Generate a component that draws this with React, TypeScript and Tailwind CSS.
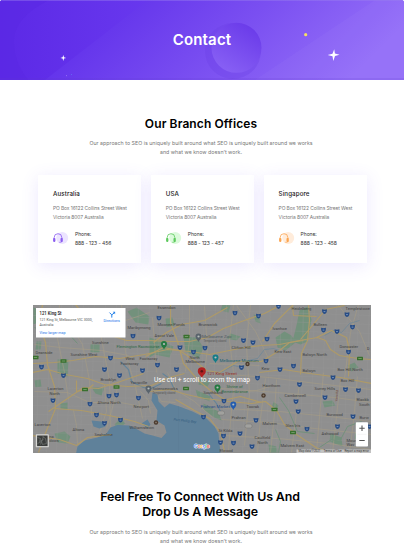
import React from "react";

type Point = [number, number];

const offices = [
  { city: "Australia", phone: "888 - 123 - 456", color: "#8a5cf0", tint: "#ece4ff" },
  { city: "USA", phone: "888 - 123 - 457", color: "#5cc95c", tint: "#dbfadb" },
  { city: "Singapore", phone: "888 - 123 - 458", color: "#fba550", tint: "#ffecdb" },
];

const labels: [string, number, number][] = [
  ["Sunshine", 92.5, 343.5], ["Deanside", 36, 353.2], ["Sunshine West", 71, 355.2], ["Maribyrnong", 128, 328],
  ["West", 126, 359.6], ["Footscray", 121, 364.4], ["Footscray", 140, 359.6], ["Brooklyn", 101, 380.5],
  ["Essendon", 158, 308.3], ["Moonee Ponds", 158, 325], ["Ascot Vale", 155, 336], ["Brunswick", 199, 325.3],
  ["Clifton Hill", 232, 348], ["North", 190, 358], ["Melbourne", 186, 362.9], ["Kew", 262, 369.3],
  ["Heidelberg", 292, 309.8], ["Templestowe", 346, 309.2], ["Ivanhoe", 273, 329.2], ["Bulleen", 314, 325.5],
  ["Kew East", 275, 352.3], ["Balwyn North", 303, 355.2], ["Doncaster", 340, 347.8], ["Balwyn", 303, 371],
  ["Box Hill North", 338, 370.5], ["Box Hill", 341, 381.5], ["Laverton", 48, 389.3], ["North", 50, 394],
  ["Laverton", 35, 425.8], ["Altona", 73, 430.2], ["Seaholme", 95, 435.7], ["Altona North", 98, 403.5],
  ["Yarraville", 131, 383.5], ["Newport", 134, 407], ["Williamstown", 130, 428], ["Southbank", 204, 393],
  ["Scienceworks", 153, 389], ["Toorak", 247, 407], ["Prahran", 232, 418.5], ["St Kilda", 219, 431],
  ["Caulfield", 255, 438.3], ["North", 258, 443], ["Elwood", 220, 451], ["Hawthorn", 263, 386],
  ["Camberwell", 285, 396.7], ["Surrey Hills", 315, 389.8], ["Burwood", 327, 415.5], ["Malvern", 263, 424],
  ["Glen Iris", 286, 426.5], ["Ashwood", 322, 434.5], ["Malvern East", 281, 446], ["Blackb", 357, 400.6],
  ["South", 359.5, 405.4], ["Burw", 360, 418.5], ["Mount", 347, 441.2], ["Wav", 347, 445.9],
];

const shields: Point[] = [
  [133.5, 335.5], [111, 357.5], [42, 366.5], [64, 375], [105, 369], [120, 375], [143, 370],
  [159.5, 317.5], [235.5, 312.5], [259, 315.5], [244, 340], [253.5, 342], [180.5, 347], [205.5, 347.5], [194, 351.5], [158, 364.5],
  [177, 369], [242, 367], [267.5, 338.5], [325, 311], [347.5, 314], [353, 326.5], [324, 329.5], [337.5, 331],
  [349, 351.5], [266.5, 360.5], [294, 365.5], [280.5, 369], [258, 377.5], [333.5, 377], [279, 306],
  [53.5, 400], [90.5, 403.5], [109.5, 395.5], [117, 394.5], [139, 397.5], [97, 414.5], [105, 422.8], [121, 419.5],
  [224.5, 400.5], [204, 416.5], [256.5, 419.7], [224, 435.5], [240.5, 433], [221, 442], [234, 442.5], [252.5, 446],
  [300, 384], [296.5, 401], [298.7, 411], [325.5, 397], [346, 389], [359, 390], [353.5, 416], [338, 426], [307.5, 428.5], [370, 426],
];

const mainRoads = [
  "M33 363L55 362 73 360 96 356 120 358 145 354 168 349 190 351 210 354 230 350 245 347 262 345 280 344 300 340 318 337 326 340 331 349 340 355 358 358 372 359",
  "M33 372L48 369 66 374 88 378 105 384 128 386 152 385 170 377 185 373",
  "M76 304L90 322 105 333 127 340 148 340 172 341 190 341 208 337 224 328 242 321 265 313 282 304",
  "M43 304L40 324 46 342 48 364 55 386 56 408 47 430 39 452",
  "M49 411L68 398 84 387 99 388 118 382 144 373",
  "M55 408L82 410 110 415 135 421 149 426",
  "M33 435L60 439 77 445 88 437 112 434",
  "M77 380L77 391 88 389 94 384",
  "M171 304L171 322 178 341 184 363 199 380 211 390 228 401 252 403 266 401 277 410 285 424 297 434 318 448 337 452",
  "M150 391L170 389 187 394 205 398 223 400 241 396 262 402",
  "M154 342L167 332 182 324 205 320 228 307",
  "M146 356L164 347 180 350 195 360 207 370 220 372 238 361 262 361 280 350 290 342 304 340",
  "M309 304L310 320 308 340 302 353 301 374",
  "M301 339L313 325 326 309 345 305",
  "M317 337L332 330 347 337 350 350 349 376",
  "M293 306L294 315 317 316",
  "M263 341L275 323 294 304",
  "M260 372L284 369 310 373 341 377 372 383",
  "M176 399L195 410 210 418 221 432 225 451",
];

const minorRoads = [
  "M56 322L97 330 126 320 150 312", "M35 344L61 347 102 350 129 355", "M60 304L58 338 65 372 69 399",
  "M97 310L104 349 110 380 111 427", "M122 304L126 352 136 387 143 418", "M68 320L83 344 90 380 92 414",
  "M74 410L77 425 78 444", "M35 391L68 392 90 402 121 402 147 407", "M105 384L107 411 100 432",
  "M119 382L115 400 107 428", "M153 317L155 342 157 372", "M190 304L190 340 186 371", "M205 306L208 348 204 380",
  "M234 304L230 340 235 380 231 420 229 451", "M251 304L247 344 250 394 245 445", "M215 373L270 377 317 383 372 389",
  "M221 388L278 392 335 397 372 402", "M225 408L280 411 329 416 372 421", "M222 419L270 422 315 428 372 434",
  "M225 435L278 438 329 443 372 449", "M277 379L275 413 271 452", "M300 380L296 420 292 452",
  "M324 372L320 416 317 452", "M341 379L337 416 333 452", "M358 376L354 421 350 452", "M266 378L261 418 258 452",
  "M237 305L256 331 270 360", "M338 304L360 331 370 355", "M359 304L351 332 345 378", "M168 372L177 390 195 401 213 417",
  "M141 391L149 400 151 413", "M153 388L162 401 176 402", "M223 379L239 392 257 390 274 385", "M210 363L240 364 260 365",
];

const fineVertical = [...Array(31).keys()].map((i) => `M${40 + i * 11} 304l-${3 + (i % 4)} 148`).join("");
const fineHorizontal = [...Array(17).keys()].map((i) => `M33 ${306 + i * 9}L150 ${308 + i * 9}L372 ${315 + i * 9}`).join("");

function Shield({ at: [x, y] }: { at: Point }) {
  return (
    <g transform={`translate(${x} ${y})`}>
      <path d="M-2.4-2.2Q0-1.5 2.4-2.2Q2.8 1.8 0 2.6Q-2.8 1.8-2.4-2.2Z" fill="#274c85" />
      <path d="M-.9.1h1.8" stroke="#8ba4c8" strokeWidth=".8" />
    </g>
  );
}

function Pin({ x, y, color }: { x: number; y: number; color: string }) {
  return (
    <g transform={`translate(${x} ${y})`}>
      <path d="M0 4.5C-.7 2.4-3 1.5-3-1A3 3 0 0 1 3-1C3 1.5.7 2.4 0 4.5Z" fill={color} />
      <circle cy="-1" r="1.1" fill="#b5bdba" />
    </g>
  );
}

function MapView() {
  return (
    <svg className="block h-[148px] w-[338px]" viewBox="33.5 304.5 338 148" fontFamily="Roboto, sans-serif">
      <rect x="33" y="304" width="339" height="149" fill="#8f8f8f" />
      <path fill="#73917c" d="M37 341h5l-1 8h-5zM58 359h11l-1 17-10-3zM91 344h9v8h-9zM34 307l6 3-2 12-4 2zM128 311l9-4 13 9-1 8-13-2zM150 337l13 4 11 5-4 11-15-3-5 3zM184 336l14 1 6 11-5 10-13-7zM300 310l8-4 4 13-4 22-7 3-8-3 4-16zM276 337l9-6 7 4 4 7-10 8-8-3zM35 380l6-1 1 7-6 1zM61 403l7-1v7l-7-1zM92 387h13l-3 8-6-2zM55 433l10-2 6 5-3 7-10-1zM115 424l6-6 5 5-8 5zM196 389l15 7-1 5-12-5zM204 403l15 8 3 9-7-3-11-8zM274 401l5 4-2 6-5-3zM323 401l10-1 3 5-11 2zM331 433l11 4 1 9-13-5zM269 444l8 2 1 6h-8zM348 365l7-3 4 5-7 4zM166 318l7-1 2 8-8 2zM223 304l8 1-2 7-8-2zM254 314l6 2 1 7-5-2zM231 333l10 3-4 4-10-2zM200 379l11 2-3 5-9-2zM356 432l10 1-2 7-9-2z" />
      <g fill="none" stroke="#989898" strokeWidth=".35">
        <path d={fineVertical} /><path d={fineHorizontal} />
      </g>
      <g fill="none" stroke="#a69c84" strokeWidth=".6">
        {minorRoads.map((d) => <path key={d} d={d} />)}
      </g>
      <path d="M76.5 453L78 446 85 440 98 437 107 433 111 427 118 424.5 130 425 138 429 145 433 153 435 162 437.5 167 432 165 425 157 420 158 410 152 400 153 392 158 394 159 401 165 407 170 403 180 406 193 411 207 418 215 426 219 433 221 453Z" fill="#5f819a" />
      <path d="M92 420l10 1 4 5-6 2-6-2zM148 419l3 5-3 4-6-5z" fill="#5f819a" />
      <g fill="none" stroke="#63849a">
        <path d="M121 361l8 8 3 12 12 6 8 1 10-5M163 373l7 5 4 9M209 393l8 10 5 10" strokeWidth="1.1" />
        <path d="M219 373l15-8 9 2 6-7 9-2 7-9 9-1 8 3M325 335l9-5 8 2 8-9 10-3" strokeWidth=".6" />
        <path d="M179 406V452" stroke="#527188" strokeWidth=".3" strokeDasharray="1 1" />
      </g>
      <path d="M35 327l15 6 16-3 12 13M280 397l9 13 9 21 17 2M320 447l12-8 8 2 8-15 14-5M276 429l5 12-2 11" fill="none" stroke="#73917c" strokeWidth="1" />
      <g fill="none" stroke="#ae9a68" strokeWidth="1.15" strokeLinejoin="round">
        {mainRoads.map((d) => <path key={d} d={d} />)}
      </g>
      {([[64, 360.5], [187, 336], [360.5, 358], [85.5, 389], [117, 386.5], [186.5, 388], [275, 409], [293.5, 432], [36, 357]] as Point[]).map(([x, y]) => (
        <g key={`${x}-${y}`}><rect x={x - 3} y={y - 1.7} width="6" height="3.4" rx=".5" fill="#39702e" /><path d={`M${x - 1.7} ${y}h3.4`} stroke="#96b58e" strokeWidth=".6" /></g>
      ))}
      {shields.map((p, i) => <Shield key={i} at={p} />)}
      <g fontSize="4.1" fill="#424242">
        {labels.map(([name, x, y], i) => <text key={i} x={x} y={y}>{name}</text>)}
        <text x="367.2" y="349.3">D</text>
      </g>
      <g fontSize="4.1" fill="#2d6946">
        <text x="117" y="347">Flemington Racecourse</text><text x="227" y="387.6">Shrine of</text><text x="222" y="392.6">Remembrance</text>
      </g>
      <text x="202.5" y="337.2" fontSize="4.4" fill="#4e5962">Melbourne Zoo</text>
      <text x="204" y="341.2" fontSize="2.7" fill="#555">Temporarily closed</text>
      <text x="153" y="393" fontSize="2.7" fill="#555">Temporarily closed</text>
      <text x="220" y="361" fontSize="4.4" fill="#19626f">Melbourne Museum</text>
      <text x="201" y="407.7" fontSize="4.3" fill="#294f87">Prahran Market</text>
      <text x="174" y="420" fontSize="3.5" fill="#345d80" fontStyle="italic" transform="rotate(7 174 420)">Port Phillip Bay</text>
      <text x="338" y="401" fontSize="3" fill="#744738" transform="rotate(-86 338 401)">Yarra Rd</text>
      <g fill="#a1a19e" stroke="#646464" strokeWidth=".35"><rect x="218" y="410.5" width="7" height="4" rx="1.7" /><rect x="245.5" y="423.5" width="7" height="4" rx="1.7" /></g>
      {([[248, 363.5], [264, 395], [156.5, 422]] as Point[]).map(([x, y]) => <g key={x}><circle cx={x} cy={y} r="2.2" fill="#4b3a2d" /><path d={`M${x - 1} ${y}h2M${x} ${y - 1}v2`} stroke="#a1988d" strokeWidth=".45" /></g>)}
      <Pin x={199} y={337} color="#59636c" /><Pin x={164.5} y={344.5} color="#247a41" /><Pin x={216} y={358} color="#147c87" />
      <Pin x={218} y={388} color="#247a41" /><Pin x={233.8} y={405} color="#245caf" /><Pin x={149} y={389} color="#59636c" />
      <path d="M202.3 378C201.5 374.5 198.3 373.8 198.3 370.7A4 4 0 0 1 206.3 370.7C206.3 373.8 203.1 374.5 202.3 378Z" fill="#b02222" />
      <circle cx="202.3" cy="370.7" r="1.3" fill="#5d1515" />
      <text x="207.5" y="374" fontSize="4.4" fill="#922c28">121 King Street</text>
      <text x="202.5" y="381.6" fontSize="6.8" textAnchor="middle" fill="#fff" textLength="96" lengthAdjust="spacingAndGlyphs">Use ctrl + scroll to zoom the map</text>
      <g>
        <rect x="36.5" y="307.5" width="89.5" height="29.5" fill="#fff" />
        <text x="40" y="314.9" fontSize="4.5" fontWeight="600" fill="#222" textLength="22" lengthAdjust="spacingAndGlyphs">121 King St</text>
        <text x="40" y="320.8" fontSize="3.7" fill="#555" textLength="53" lengthAdjust="spacingAndGlyphs">121 King St, Melbourne VIC 3000,</text>
        <text x="40" y="325.3" fontSize="3.7" fill="#555" textLength="14" lengthAdjust="spacingAndGlyphs">Australia</text>
        <text x="40" y="333.6" fontSize="3.7" fill="#1a73e8" textLength="26" lengthAdjust="spacingAndGlyphs">View larger map</text>
        <text x="104" y="321.8" fontSize="3.7" fill="#1a73e8" textLength="16.5" lengthAdjust="spacingAndGlyphs">Directions</text>
      </g>
      <path d="M110 312.1l2.3 2.3v2.7M112.3 314.4l2.6-2.2" stroke="#2380e8" fill="none" strokeWidth="1" /><path d="M113.3 311.3h2.3v2.4z" fill="#2380e8" />
      <text x="49.8" y="437" fontSize="4" fill="#444">na</text><text x="49.8" y="441.8" fontSize="4" fill="#444">dows</text>
      <rect x="36.3" y="433.8" width="13" height="13" rx=".6" fill="#d8d8d5" />
      <rect x="37.6" y="435" width="10.5" height="10.6" fill="#3b3d3c" />
      <path d="M38 437l3 1-1 3 4-2M43 436l3 2 1 5M38 443l4-2 1 3 4-1M44 436l-3 8" fill="none" stroke="#737774" strokeWidth=".7" />
      <text x="194.5" y="447.3" fontFamily="Inter, sans-serif" fontSize="5.2" fontWeight="600" stroke="#f3f3f3" strokeWidth=".8" paintOrder="stroke" textLength="15.5">
        <tspan fill="#4285f4">G</tspan><tspan fill="#e76156">o</tspan><tspan fill="#edb941">o</tspan><tspan fill="#4285f4">g</tspan><tspan fill="#47a967">l</tspan><tspan fill="#e76156">e</tspan>
      </text>
      <rect x="297" y="449" width="75" height="4" fill="#c2c2c2" />
      <g fontSize="2.8" fill="#333"><text x="299" y="451.7" textLength="22" lengthAdjust="spacingAndGlyphs">Map data ©2021</text><text x="324" y="451.7" textLength="18" lengthAdjust="spacingAndGlyphs">Terms of Use</text><text x="345" y="451.7" textLength="24.5" lengthAdjust="spacingAndGlyphs">Report a map error</text></g>
      <rect x="356.3" y="421.7" width="12.2" height="24.3" rx=".8" fill="#fff" />
      <path d="M358 433.8h9" stroke="#e4e4e4" strokeWidth=".4" />
      <path d="M359.8 427.8h5.4M362.5 425.1v5.4M359.8 440h5.4" stroke="#555" strokeWidth="1.1" />
    </svg>
  );
}

function Headset({ color, tint }: { color: string; tint: string }) {
  return (
    <svg className="block h-[14px] w-[16px]" viewBox="0 0 16 14" fill="none">
      <circle cx="9.2" cy="7" r="6" fill={tint} />
      <path d="M1.2 8V6.5a3.8 3.8 0 0 1 7.6 0V8M8.9 10.2c0 1-1 1.1-2.6 1.1" stroke={color} strokeWidth=".8" />
      <rect x=".1" y="7.1" width="2.3" height="3.8" rx=".8" fill={color} /><rect x="7.5" y="7.1" width="2.3" height="3.8" rx=".8" fill={color} />
    </svg>
  );
}

function Hero() {
  return (
    <header className="relative flex h-20 shrink-0 items-center justify-center overflow-hidden rounded-t-[3px] bg-[#6d3df0]">
      <svg className="absolute inset-0 h-20 w-[404px]" viewBox="0 0 404 80">
        <defs>
          <linearGradient id="hero" gradientUnits="userSpaceOnUse" x1="110" y1="0" x2="270" y2="160"><stop stopColor="#6232eb" /><stop offset=".5" stopColor="#7a4ff1" /><stop offset="1" stopColor="#946ff8" /></linearGradient>
          <linearGradient id="left" x1="0" x2="1"><stop stopColor="#5c29e6" /><stop offset="1" stopColor="#6838ee" /></linearGradient>
          <linearGradient id="orb" x1=".8" y1="0" x2=".2" y2="1"><stop stopColor="#6939e9" /><stop offset="1" stopColor="#8962f5" /></linearGradient>
        </defs>
        <path fill="url(#hero)" d="M0 0h404v80H0z" />
        <path d="M0 0H148L45 80H0Z" fill="url(#left)" />
        <path d="M49 0Q15 17 14 39T28 80H0V0Z" fill="#5a27e4" opacity=".5" />
        <path d="M375 0L255 80H404V0Z" fill="#b49aff" opacity=".08" />
        <circle cx="233" cy="51" r="28" fill="#6940e5" opacity=".3" />
        <circle cx="236.5" cy="47.8" r="25" fill="url(#orb)" />
        <path d="M0 .4H404" stroke="#9b80ef" strokeWidth=".8" opacity=".6" />
        <path d="M0 79H404" stroke="#633ccd" strokeWidth=".7" opacity=".45" />
        <circle cx="305.7" cy="34.7" r="1.6" fill="#f6df62" />
        <path d="M334.2 49.2l.7 4.4 4.6 1.1-4.5 1.4-1.7 4.9-.8-4.7-4.8-1.2 4.8-1.4z" fill="#fff" />
        <path d="M63.3 55l.7 2.3 2.2.6-2.2.7-.7 2.3-.7-2.3-2.2-.7 2.2-.6z" fill="#fff" />
        <circle cx="66.5" cy="75.8" r=".45" fill="#c4aaff" /><circle cx="71.5" cy="74.3" r=".4" fill="#60b8ff" />
      </svg>
      <h1 className="relative text-[15px] font-semibold leading-5 tracking-[0.17px] text-white">Contact</h1>
    </header>
  );
}

function Intro({ spaced = false }: { spaced?: boolean }) {
  return (
    <p className={`text-center text-[5.25px] tracking-[0.02px] text-[#777] ${spaced ? "leading-[9.8px]" : "leading-[9px]"}`}>
      Our approach to SEO is uniquely built around what SEO is uniquely built around we works<br />and what we know doesn’t work.
    </p>
  );
}

export default function App() {
  return (
    <main className="flex h-[552px] w-[404px] flex-col overflow-hidden bg-white font-['Inter',sans-serif]">
      <Hero />
      <section className="flex h-[224.5px] shrink-0 flex-col pt-9">
        <h2 className="pr-[2px] text-center text-[12px] font-semibold leading-4 tracking-[0.1px] text-black">Our Branch Offices</h2>
        <div className="pr-[2px] pt-[7px]"><Intro /></div>
        <div className="flex gap-[9.5px] pl-[38px] pt-[18px]">
          {offices.map((office) => (
            <article key={office.city} className="h-[88px] w-[103.3px] bg-white pl-[15px] pt-[14px] shadow-[0_3px_16px_rgba(109,77,250,0.13)]">
              <h3 className="text-[6.2px] font-medium leading-[9px] tracking-[0.1px] text-[#222]">{office.city}</h3>
              <p className="pt-[6px] text-[4.9px] leading-[9px] tracking-[-0.08px] text-[#777]">PO Box 16122 Collins Street West<br />Victoria 8007 Australia</p>
              <div className="flex gap-[6px] pt-[8px]">
                <div className="pt-[1px]"><Headset color={office.color} tint={office.tint} /></div>
                <p className="text-[5px] leading-[9px] tracking-[-0.05px] text-[#333]">Phone:<br />{office.phone}</p>
              </div>
            </article>
          ))}
        </div>
      </section>
      <section className="shrink-0 pl-[33px]"><MapView /></section>
      <section className="pt-[36px]">
        <h2 className="pr-[4px] text-center text-[12.4px] font-semibold leading-[15.3px] tracking-[-0.12px] text-black">Feel Free To Connect With Us And<br />Drop Us A Message</h2>
        <div className="pr-[2px] pt-[8.5px]"><Intro spaced /></div>
      </section>
    </main>
  );
}
